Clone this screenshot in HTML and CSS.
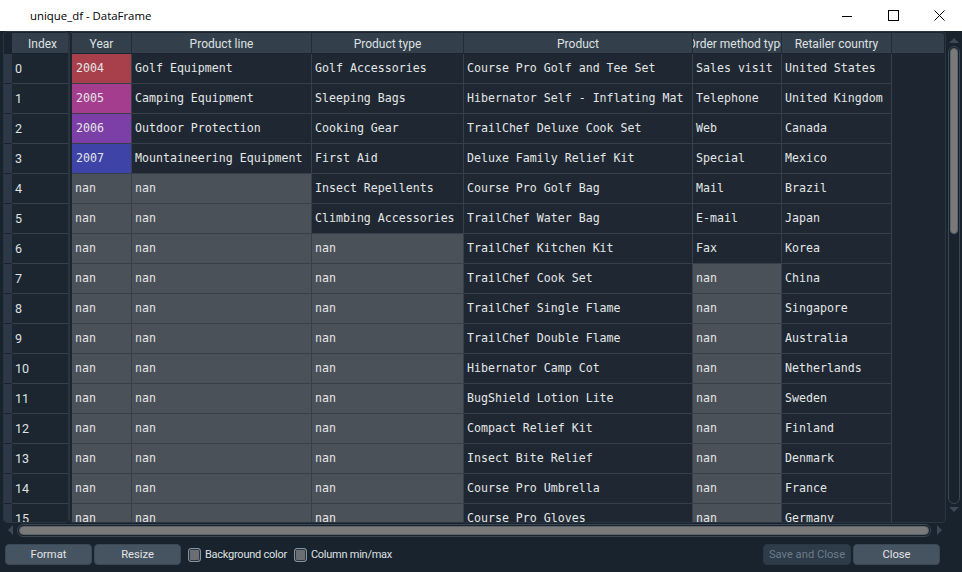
FILE: index.html
```html
<!DOCTYPE html>
<html>
<head>
<meta charset="utf-8">
<link rel="stylesheet" href="styles.css">
</head>
<body>
<div class="titlebar">
  <span class="title">unique_df - DataFrame</span>
  <div class="controls">
    <div class="ctl"><svg width="10" height="10" viewBox="0 0 10 10"><path d="M0 5.5H10" stroke="#000" stroke-width="1"/></svg></div>
    <div class="ctl"><svg width="11" height="11" viewBox="0 0 11 11"><rect x="0.5" y="0.5" width="10" height="10" fill="none" stroke="#000" stroke-width="1"/></svg></div>
    <div class="ctl"><svg width="11" height="11" viewBox="0 0 11 11"><path d="M0.5 0.5L10.5 10.5M10.5 0.5L0.5 10.5" stroke="#000" stroke-width="1"/></svg></div>
  </div>
</div>

<div class="main">
  <div class="index-panel">
    <div class="corner"></div><div class="ihead">Index</div>
    <div class="strip"></div><div class="icell">0</div>
    <div class="strip"></div><div class="icell">1</div>
    <div class="strip"></div><div class="icell">2</div>
    <div class="strip"></div><div class="icell">3</div>
    <div class="strip"></div><div class="icell">4</div>
    <div class="strip"></div><div class="icell">5</div>
    <div class="strip"></div><div class="icell">6</div>
    <div class="strip"></div><div class="icell">7</div>
    <div class="strip"></div><div class="icell">8</div>
    <div class="strip"></div><div class="icell">9</div>
    <div class="strip"></div><div class="icell">10</div>
    <div class="strip"></div><div class="icell">11</div>
    <div class="strip"></div><div class="icell">12</div>
    <div class="strip"></div><div class="icell">13</div>
    <div class="strip"></div><div class="icell">14</div>
    <div class="strip"></div><div class="icell">15</div>
  </div>

  <div class="data-panel">
    <div class="grid">
      <div class="hd">Year</div><div class="hd">Product line</div><div class="hd">Product type</div><div class="hd">Product</div><div class="hd">Order method type</div><div class="hd">Retailer country</div><div class="hd last"></div>

      <div class="c y04">2004</div><div class="c">Golf Equipment</div><div class="c">Golf Accessories</div><div class="c">Course Pro Golf and Tee Set</div><div class="c">Sales visit</div><div class="c">United States</div><div class="e"></div>
      <div class="c y05">2005</div><div class="c">Camping Equipment</div><div class="c">Sleeping Bags</div><div class="c">Hibernator Self - Inflating Mat</div><div class="c">Telephone</div><div class="c">United Kingdom</div><div class="e"></div>
      <div class="c y06">2006</div><div class="c">Outdoor Protection</div><div class="c">Cooking Gear</div><div class="c">TrailChef Deluxe Cook Set</div><div class="c">Web</div><div class="c">Canada</div><div class="e"></div>
      <div class="c y07">2007</div><div class="c">Mountaineering Equipment</div><div class="c">First Aid</div><div class="c">Deluxe Family Relief Kit</div><div class="c">Special</div><div class="c">Mexico</div><div class="e"></div>
      <div class="c n">nan</div><div class="c n">nan</div><div class="c">Insect Repellents</div><div class="c">Course Pro Golf Bag</div><div class="c">Mail</div><div class="c">Brazil</div><div class="e"></div>
      <div class="c n">nan</div><div class="c n">nan</div><div class="c">Climbing Accessories</div><div class="c">TrailChef Water Bag</div><div class="c">E-mail</div><div class="c">Japan</div><div class="e"></div>
      <div class="c n">nan</div><div class="c n">nan</div><div class="c n">nan</div><div class="c">TrailChef Kitchen Kit</div><div class="c">Fax</div><div class="c">Korea</div><div class="e"></div>
      <div class="c n">nan</div><div class="c n">nan</div><div class="c n">nan</div><div class="c">TrailChef Cook Set</div><div class="c n">nan</div><div class="c">China</div><div class="e"></div>
      <div class="c n">nan</div><div class="c n">nan</div><div class="c n">nan</div><div class="c">TrailChef Single Flame</div><div class="c n">nan</div><div class="c">Singapore</div><div class="e"></div>
      <div class="c n">nan</div><div class="c n">nan</div><div class="c n">nan</div><div class="c">TrailChef Double Flame</div><div class="c n">nan</div><div class="c">Australia</div><div class="e"></div>
      <div class="c n">nan</div><div class="c n">nan</div><div class="c n">nan</div><div class="c">Hibernator Camp Cot</div><div class="c n">nan</div><div class="c">Netherlands</div><div class="e"></div>
      <div class="c n">nan</div><div class="c n">nan</div><div class="c n">nan</div><div class="c">BugShield Lotion Lite</div><div class="c n">nan</div><div class="c">Sweden</div><div class="e"></div>
      <div class="c n">nan</div><div class="c n">nan</div><div class="c n">nan</div><div class="c">Compact Relief Kit</div><div class="c n">nan</div><div class="c">Finland</div><div class="e"></div>
      <div class="c n">nan</div><div class="c n">nan</div><div class="c n">nan</div><div class="c">Insect Bite Relief</div><div class="c n">nan</div><div class="c">Denmark</div><div class="e"></div>
      <div class="c n">nan</div><div class="c n">nan</div><div class="c n">nan</div><div class="c">Course Pro Umbrella</div><div class="c n">nan</div><div class="c">France</div><div class="e"></div>
      <div class="c n">nan</div><div class="c n">nan</div><div class="c n">nan</div><div class="c">Course Pro Gloves</div><div class="c n">nan</div><div class="c">Germany</div><div class="e"></div>
    </div>
  </div>

  <div class="vscroll">
    <svg class="arrow" width="10" height="6" viewBox="0 0 10 6"><path d="M0 6L5 1L10 6Z"/></svg>
    <div class="vtrack"><div class="vhandle"></div></div>
    <svg class="arrow" width="10" height="6" viewBox="0 0 10 6"><path d="M0 0L5 5L10 0Z"/></svg>
  </div>
</div>

<div class="hscroll">
  <svg class="harrow" width="6" height="10" viewBox="0 0 6 10"><path d="M6 0L1 5L6 10Z"/></svg>
  <div class="htrack"><div class="hhandle"></div></div>
  <svg class="harrow" width="6" height="10" viewBox="0 0 6 10"><path d="M0 0L5 5L0 10Z"/></svg>
</div>

<div class="buttons">
  <div class="btn">Format</div>
  <div class="btn">Resize</div>
  <div class="check"><span class="cb"></span>Background color</div>
  <div class="check"><span class="cb"></span>Column min/max</div>
  <div class="spacer"></div>
  <div class="btn disabled">Save and Close</div>
  <div class="btn">Close</div>
</div>
</body>
</html>
```

FILE: styles.css
```css
* { box-sizing: border-box; }

body {
  margin: 0;
  width: 962px;
  height: 572px;
  overflow: hidden;
  background: #19232d;
  color: #dfe1e2;
  font-family: Roboto, "Open Sans", "Liberation Sans", sans-serif;
  font-size: 11.5px;
}

.titlebar {
  height: 31px;
  background: #ffffff;
  color: #000;
  display: flex;
  align-items: center;
}
.title {
  margin-left: 30px;
  font-family: "Open Sans", "Liberation Sans", sans-serif;
  font-size: 11.4px;
}
.controls { margin-left: auto; display: flex; }
.ctl {
  width: 46px;
  height: 31px;
  display: flex;
  align-items: center;
  justify-content: center;
}

.main {
  display: flex;
  height: 492px;
  padding-left: 3px;
}

.index-panel {
  width: 66px;
  height: 492px;
  border: 1px solid #2a3542;
  border-radius: 4px;
  padding-top: 1px;
  overflow: hidden;
  display: grid;
  grid-template-columns: 8px 56px;
  grid-template-rows: 21px;
  grid-auto-rows: 30px;
  align-content: start;
  background: #19232d;
}
.corner { background: #19232d; }
.ihead {
  height: 20px;
  background: #333f4b;
  display: flex;
  align-items: center;
  justify-content: center;
  padding-left: 5px;
  padding-top: 2px;
  font-size: 12px;
}
.strip {
  background: #2c3845;
  border-bottom: 1px solid #19232d;
}
.icell {
  background: #1c2630;
  border-bottom: 1px solid #37414c;
  padding-left: 3px;
  padding-bottom: 1px;
  display: flex;
  align-items: center;
  font-size: 12.5px;
}

.data-panel {
  width: 877px;
  height: 492px;
  border: 1px solid #2a3542;
  border-radius: 4px;
  padding: 1px 1px 0 2px;
  overflow: hidden;
  background: #1d2630;
}
.grid {
  display: grid;
  grid-template-columns: 60px 180px 152px 229px 89px 110px 1fr;
  grid-template-rows: 21px;
  grid-auto-rows: 30px;
}
.hd {
  height: 20px;
  padding-top: 2px;
  background: #333f4b;
  border-right: 1px solid #222d38;
  display: flex;
  align-items: center;
  justify-content: center;
  white-space: nowrap;
  overflow: hidden;
  font-size: 12px;
}
.hd.last { border-right: none; border-top-right-radius: 3px; }

.c {
  background: #1f2832;
  border-right: 1px solid #37404a;
  border-bottom: 1px solid #37404a;
  padding-left: 3px;
  padding-bottom: 1px;
  display: flex;
  align-items: center;
  white-space: nowrap;
  overflow: hidden;
  font-family: "DejaVu Sans Mono", "Liberation Mono", monospace;
  font-size: 11.6px;
  color: #e4e6e7;
}
.c.n { background: #4b5158; }
.c.y04 { background: #a8404b; padding-left: 4px; }
.c.y05 { background: #a53d8e; padding-left: 4px; }
.c.y06 { background: #7c3ea7; padding-left: 4px; }
.c.y07 { background: #3d43a7; padding-left: 4px; }
.e { background: #1d2630; }

.vscroll {
  width: 14px;
  margin-left: 1px;
  padding-top: 6px;
  display: flex;
  flex-direction: column;
  align-items: center;
  gap: 3px;
}
.vscroll .arrow path,
.harrow path { fill: #3b4856; }
.vtrack {
  width: 12px;
  height: 458px;
  border: 1px solid #3a4654;
  border-radius: 6px;
  padding: 1px;
}
.vhandle {
  height: 186px;
  background: #7a7a7a;
  border: 1px solid #5f6468;
  border-radius: 5px;
}

.hscroll {
  height: 14px;
  display: flex;
  align-items: center;
  padding-left: 7px;
}
.harrow { flex: none; }
.htrack {
  width: 914px;
  height: 13px;
  margin: 0 6px 0 4px;
  border: 1px solid #3a4654;
  border-radius: 6px;
  padding: 1px;
}
.hhandle {
  height: 9px;
  background: #7a7a7a;
  border: 1px solid #5f6468;
  border-radius: 5px;
}

.buttons {
  margin-top: 7px;
  height: 21px;
  display: flex;
  align-items: center;
  padding-left: 5px;
  padding-right: 22px;
}
.btn {
  width: 87px;
  height: 21px;
  margin-right: 2px;
  background: #465360;
  border: 1px solid #3b4855;
  border-radius: 4px;
  display: flex;
  align-items: center;
  justify-content: center;
  color: #e2e4e5;
  font-size: 11.2px;
}
.btn.disabled {
  width: 88px;
  background: #2e3b48;
  color: #6d7c89;
  border-color: #2b3744;
}
.btn:last-child { margin-right: 0; }
.check {
  display: flex;
  align-items: center;
  margin-left: 5px;
  margin-right: 2px;
  font-size: 11px;
  letter-spacing: -0.25px;
}
.cb {
  width: 13px;
  height: 14px;
  border: 1px solid #8893a0;
  border-radius: 3px;
  background: #6b6e72;
  box-shadow: inset 0 0 0 1px #2a3440;
  margin-right: 4px;
}
.spacer { flex: 1; }
```
